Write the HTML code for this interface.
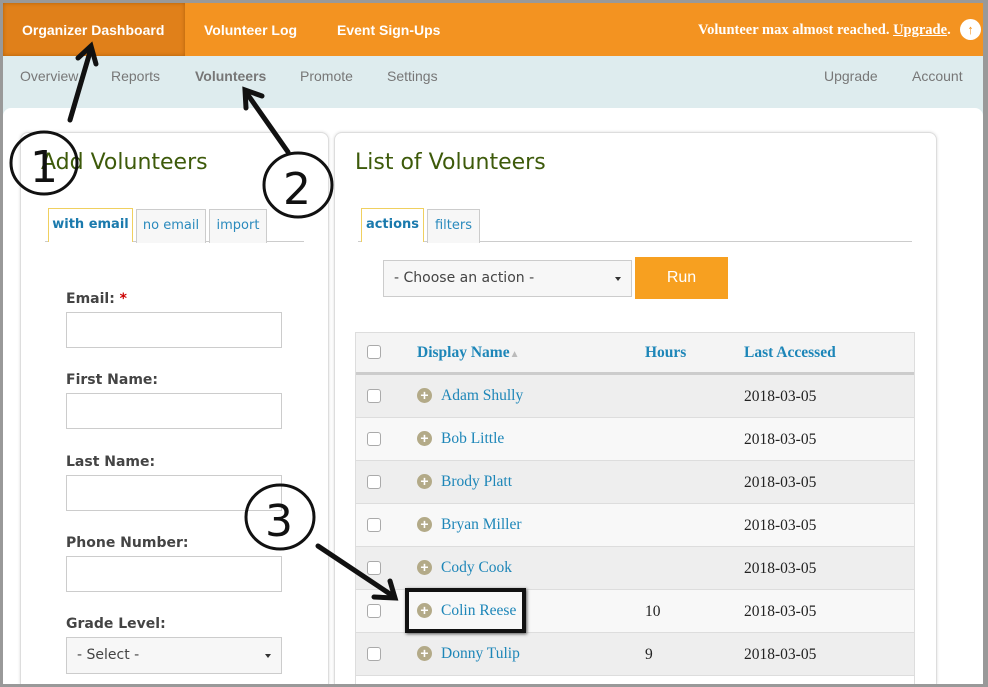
<!DOCTYPE html>
<html style="width:988px;height:687px;overflow:hidden"><head><style>
*{box-sizing:border-box;margin:0;padding:0}
body{width:988px;height:687px;overflow:hidden;background:#999;position:relative;font-family:"Liberation Sans",sans-serif}
.a{position:absolute}
.top{left:3px;top:3px;width:980px;height:53px;background:#f39321}
.top b{position:absolute;top:19px;color:#fff;font-size:14px}
.sub{left:3px;top:56px;width:980px;height:60px;background:#deecee}
.sub span{position:absolute;top:12px;color:#777;font-size:14px}
.main{left:3px;top:108px;width:980px;height:576px;background:#fff;border-radius:8px 8px 0 0}
.panel{background:#fff;border:1px solid #ddd;border-bottom:none;border-radius:8px 8px 0 0;box-shadow:0 0 3px #ddd}
h2{position:absolute;font-family:"DejaVu Sans",sans-serif;font-weight:normal;color:#3d5a0a;font-size:22px}
.tab{position:absolute;height:34px;border:1px solid #ccc;border-bottom:none;background:#f7f7f7;color:#2a8abd;font-family:"DejaVu Sans",sans-serif;font-size:13px;line-height:32px;text-align:center}
.tab.on{background:#fff;border-color:#f0d060;border-width:1px 1px 0 1px;font-weight:bold;color:#1a7aad}
label{position:absolute;left:66px;font-family:"DejaVu Sans",sans-serif;font-weight:bold;font-size:14px;color:#444}
.in{position:absolute;left:66px;width:216px;height:36px;border:1px solid #ccc;background:#fff}
.sel{position:absolute;border:1px solid #ccc;background:#f7f7f7;font-family:"DejaVu Sans",sans-serif;font-size:14px;color:#444;padding-left:10px;line-height:34px}
.sel:after{content:"";position:absolute;right:10px;top:16px;border:3px solid transparent;border-top:4px solid #333}
.tbl{left:355px;top:332px;width:560px;height:352px;border:1px solid #ddd;border-bottom:none;overflow:hidden}
.row{position:absolute;left:0;width:558px;height:43px;border-bottom:1px solid #ddd;font-family:"Liberation Serif",serif;font-size:15.5px}
.cb{position:absolute;left:11px;top:14px;width:14px;height:14px;border:1px solid #aaa;border-radius:3px;background:#fff}
.pl{position:absolute;left:61px;top:13px;width:15px;height:15px;border-radius:50%;background:#b3aa88;color:#fff;font:bold 14px/15px "Liberation Sans";text-align:center}
.nm{position:absolute;left:85px;top:12px;color:#1d86b8}
.hr{position:absolute;left:289px;top:13px;color:#222}
.dt{position:absolute;left:388px;top:13px;color:#222}
.h{color:#1d86b8;font-weight:bold;position:absolute;top:11px}
</style></head><body>
<div class="a top">
 <div class="a" style="left:0;top:0;width:182px;height:53px;background:#e0801a;box-shadow:inset 0 0 4px #b0600a"></div>
 <b style="left:19px;font-size:14px">Organizer Dashboard</b>
 <b style="left:201px">Volunteer Log</b>
 <b style="left:334px">Event Sign-Ups</b>
 <span class="a" style="left:695px;top:19px;color:#fff;font:bold 14.5px 'Liberation Serif',serif">Volunteer max almost reached. <u>Upgrade</u>.</span>
 <div class="a" style="left:957px;top:16px;width:21px;height:21px;border-radius:50%;background:#fff;color:#f39321;font:bold 13px/21px sans-serif;text-align:center">↑</div>
</div>
<div class="a sub">
 <span style="left:17px">Overview</span><span style="left:108px">Reports</span><span style="left:192px;font-weight:bold">Volunteers</span><span style="left:297px">Promote</span><span style="left:384px">Settings</span><span style="left:821px">Upgrade</span><span style="left:909px">Account</span>
</div>
<div class="a main"></div>
<div class="a panel" style="left:20px;top:132px;width:309px;height:552px"></div>
<div class="a panel" style="left:334px;top:132px;width:603px;height:552px"></div>
<h2 style="left:41px;top:150px">Add Volunteers</h2>
<h2 style="left:355px;top:150px">List of Volunteers</h2>
<div class="a" style="left:45px;top:241px;width:259px;height:1px;background:#ccc"></div>
<div class="tab on" style="left:48px;top:208px;width:85px">with email</div>
<div class="tab" style="left:136px;top:209px;width:70px">no email</div>
<div class="tab" style="left:209px;top:209px;width:58px">import</div>
<div class="a" style="left:358px;top:241px;width:554px;height:1px;background:#ccc"></div>
<div class="tab on" style="left:361px;top:208px;width:63px">actions</div>
<div class="tab" style="left:427px;top:209px;width:53px">filters</div>
<label style="top:291px">Email: <span style="color:#c00">*</span></label>
<div class="in" style="top:312px"></div>
<label style="top:372px">First Name:</label>
<div class="in" style="top:393px"></div>
<label style="top:454px">Last Name:</label>
<div class="in" style="top:475px"></div>
<label style="top:535px">Phone Number:</label>
<div class="in" style="top:556px"></div>
<label style="top:616px">Grade Level:</label>
<div class="sel" style="left:66px;top:637px;width:216px;height:37px">- Select -</div>
<div class="sel" style="left:383px;top:260px;width:249px;height:37px">- Choose an action -</div>
<div class="a" style="left:635px;top:257px;width:93px;height:42px;background:#f7a020;color:#fff;font-size:16px;text-align:center;line-height:42px">Run</div>
<div class="a tbl">
 <div class="row" style="top:0;height:42px;background:#f4f4f4;border-bottom:3px solid #ccc"><div class="cb" style="top:12px"></div><span class="h" style="left:61px">Display Name<span style="color:#bbb;font-size:10px">▲</span></span><span class="h" style="left:289px">Hours</span><span class="h" style="left:388px">Last Accessed</span></div>
 <div class="row" style="top:42px;background:#eee"><div class="cb"></div><div class="pl">+</div><span class="nm">Adam Shully</span><span class="dt">2018-03-05</span></div>
 <div class="row" style="top:85px;background:#f8f8f8"><div class="cb"></div><div class="pl">+</div><span class="nm">Bob Little</span><span class="dt">2018-03-05</span></div>
 <div class="row" style="top:128px;background:#eee"><div class="cb"></div><div class="pl">+</div><span class="nm">Brody Platt</span><span class="dt">2018-03-05</span></div>
 <div class="row" style="top:171px;background:#f8f8f8"><div class="cb"></div><div class="pl">+</div><span class="nm">Bryan Miller</span><span class="dt">2018-03-05</span></div>
 <div class="row" style="top:214px;background:#eee"><div class="cb"></div><div class="pl">+</div><span class="nm">Cody Cook</span><span class="dt">2018-03-05</span></div>
 <div class="row" style="top:257px;background:#f8f8f8"><div class="cb"></div><div class="pl">+</div><span class="nm">Colin Reese</span><span class="hr">10</span><span class="dt">2018-03-05</span></div>
 <div class="row" style="top:300px;background:#eee"><div class="cb"></div><div class="pl">+</div><span class="nm">Donny Tulip</span><span class="hr">9</span><span class="dt">2018-03-05</span></div>
</div>
<div class="a" style="left:0;top:0;width:988px;height:687px;border:3px solid #999;border-right-width:5px;pointer-events:none"></div>
<div class="a" style="left:405px;top:588px;width:121px;height:45px;border:4px solid #111;box-shadow:1px 1px 3px #555"></div>
<svg class="a" style="left:0;top:0" width="988" height="687" fill="none" stroke="#111" stroke-linecap="round">
 <ellipse cx="44" cy="163" rx="33" ry="31" stroke-width="3"/>
 <ellipse cx="298" cy="185" rx="34" ry="32" stroke-width="3"/>
 <ellipse cx="280" cy="517" rx="34" ry="32" stroke-width="3"/>
 <path d="M70 120 L90 52" stroke-width="5"/><path d="M78 58 L91 46 L96 64" stroke-width="5"/>
 <path d="M288 152 L248 95" stroke-width="5"/><path d="M246 108 L245 90 L262 96" stroke-width="5"/>
 <path d="M318 546 L390 594" stroke-width="5"/><path d="M374 597 L395 598 L390 581" stroke-width="5"/>
 <g fill="#111" stroke="none" font-family="DejaVu Sans" font-size="44"><text x="30" y="182">1</text><text x="283" y="204">2</text><text x="265" y="536">3</text></g>
</svg>
</body></html>
